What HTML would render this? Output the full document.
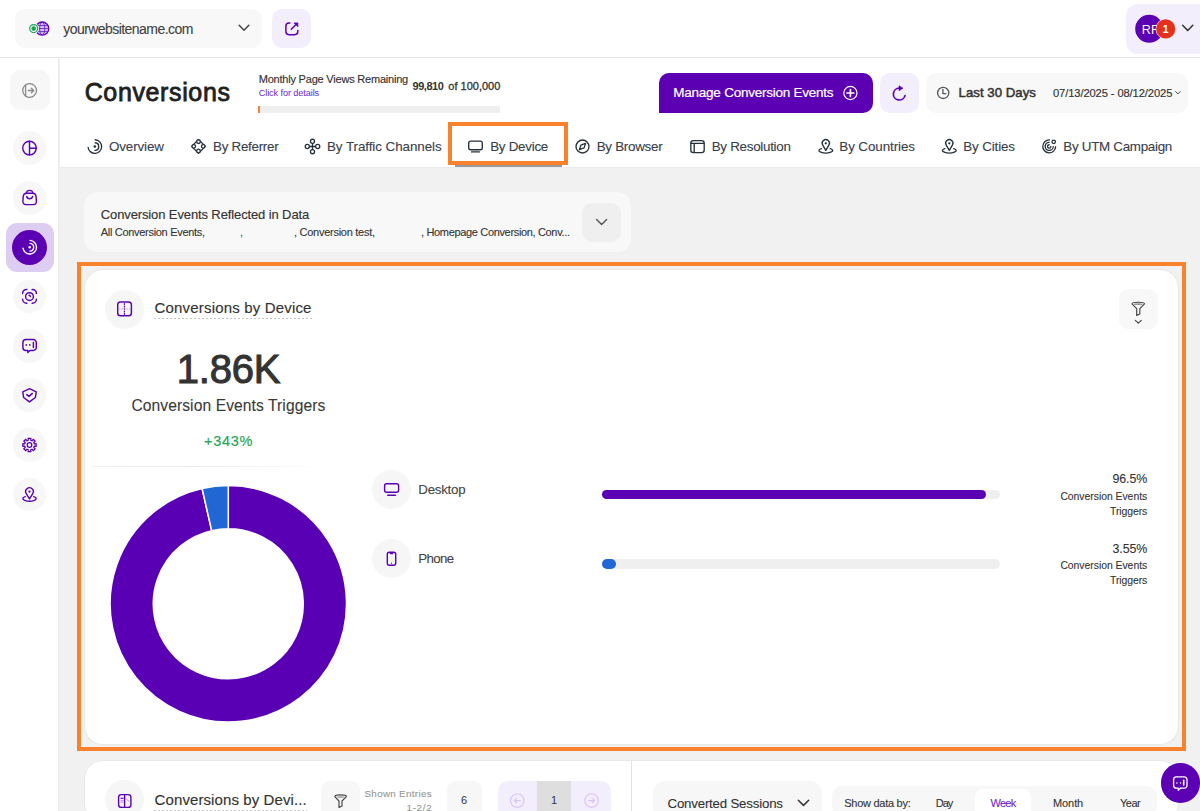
<!DOCTYPE html>
<html><head><meta charset="utf-8"><title>Conversions by Device</title>
<style>
html,body{margin:0;padding:0;width:1200px;height:811px;overflow:hidden;background:#f1f1f1;}
body{position:relative;font-family:"Liberation Sans",sans-serif;}
.t{position:absolute;white-space:nowrap;line-height:1;}
.b{position:absolute;box-sizing:border-box;}
svg.i{position:absolute;overflow:visible;}
</style></head><body>
<div class="b" style="left:0px;top:0px;width:1200px;height:811px;background:#f1f1f1;border-radius:0;"></div>
<div class="b" style="left:0px;top:0px;width:1200px;height:57px;background:#ffffff;border-radius:0;"></div>
<div class="b" style="left:0px;top:57px;width:1200px;height:1px;background:#e6e6e6;border-radius:0;"></div>
<div class="b" style="left:0px;top:58px;width:58px;height:753px;background:#ffffff;border-radius:0;"></div>
<div class="b" style="left:58px;top:58px;width:1.3px;height:753px;background:#e9e9e9;border-radius:0;"></div>
<div class="b" style="left:59.5px;top:58px;width:1141px;height:109px;background:#ffffff;border-radius:0;"></div>
<div class="b" style="left:59.5px;top:166.5px;width:1141px;height:1.2px;background:#ebebeb;border-radius:0;"></div>
<div class="b" style="left:15px;top:9px;width:247px;height:39px;background:#f8f8f8;border-radius:10px;"></div>
<div class="t" style="left:63.30px;top:21.55px;font-size:14.00px;color:#404040;letter-spacing:-0.559px;-webkit-text-stroke:0.1px #404040;">yourwebsitename.com</div>
<div class="b" style="left:272px;top:9px;width:39px;height:39px;background:#f3eefc;border-radius:10px;"></div>
<div class="b" style="left:1126px;top:4px;width:90px;height:50px;background:#f3eefc;border-radius:12px;"></div>
<div class="b" style="left:10px;top:70px;width:40px;height:40px;background:#f7f7f7;border-radius:10px;"></div>
<div class="b" style="left:12.5px;top:131.0px;width:33.6px;height:33.6px;background:#f7f7f7;border-radius:50%;"></div>
<div class="b" style="left:12.5px;top:181.0px;width:33.6px;height:33.6px;background:#f7f7f7;border-radius:50%;"></div>
<div class="b" style="left:12.5px;top:279.59999999999997px;width:33.6px;height:33.6px;background:#f7f7f7;border-radius:50%;"></div>
<div class="b" style="left:12.5px;top:329.0px;width:33.6px;height:33.6px;background:#f7f7f7;border-radius:50%;"></div>
<div class="b" style="left:12.5px;top:378.4px;width:33.6px;height:33.6px;background:#f7f7f7;border-radius:50%;"></div>
<div class="b" style="left:12.5px;top:428.0px;width:33.6px;height:33.6px;background:#f7f7f7;border-radius:50%;"></div>
<div class="b" style="left:12.5px;top:477.7px;width:33.6px;height:33.6px;background:#f7f7f7;border-radius:50%;"></div>
<div class="b" style="left:6px;top:222.5px;width:47.5px;height:49.5px;background:#decdf2;border-radius:11px;"></div>
<div class="b" style="left:12px;top:229.5px;width:35px;height:35px;background:#5b00b3;border-radius:50%;"></div>
<div class="t" style="left:84.70px;top:80.03px;font-size:25.00px;color:#1f1f1f;letter-spacing:0.630px;-webkit-text-stroke:0.8px #1f1f1f;">Conversions</div>
<div class="t" style="left:258.70px;top:74.09px;font-size:11.00px;color:#333333;letter-spacing:-0.207px;-webkit-text-stroke:0.15px #333333;">Monthly Page Views Remaining</div>
<div class="t" style="left:258.70px;top:88.61px;font-size:9.20px;color:#6d1fd1;letter-spacing:-0.111px;">Click for details</div>
<div class="t" style="left:412.50px;top:80.59px;font-size:11.00px;color:#333333;letter-spacing:-0.452px;font-weight:700;">99,810</div>
<div class="t" style="left:448.30px;top:80.59px;font-size:11.00px;color:#333333;letter-spacing:0.003px;-webkit-text-stroke:0.3px #333333;">of 100,000</div>
<div class="b" style="left:258px;top:106px;width:242px;height:6.5px;background:#efefef;border-radius:0;"></div>
<div class="b" style="left:258px;top:106px;width:1.5px;height:6.5px;background:#f0843a;border-radius:0;"></div>
<div class="b" style="left:659px;top:73px;width:214px;height:40px;background:#5b00b3;border-radius:10px 10px 10px 0;"></div>
<div class="t" style="left:673.30px;top:85.77px;font-size:13.50px;color:#ffffff;letter-spacing:-0.241px;-webkit-text-stroke:0.2px #ffffff;">Manage Conversion Events</div>
<div class="b" style="left:880px;top:73px;width:39px;height:40px;background:#f3eefc;border-radius:10px;"></div>
<div class="b" style="left:926px;top:73px;width:262px;height:40px;background:#f8f8f8;border-radius:10px;"></div>
<div class="t" style="left:958.50px;top:86.02px;font-size:13.20px;color:#333333;letter-spacing:0.043px;-webkit-text-stroke:0.5px #333333;">Last 30 Days</div>
<div class="t" style="left:1053.00px;top:87.92px;font-size:11.20px;color:#333333;letter-spacing:-0.117px;-webkit-text-stroke:0.15px #333333;">07/13/2025 - 08/12/2025</div>
<div class="t" style="left:109.00px;top:139.55px;font-size:13.40px;color:#39404a;letter-spacing:-0.125px;-webkit-text-stroke:0.1px #39404a;">Overview</div>
<div class="t" style="left:213.00px;top:139.55px;font-size:13.40px;color:#39404a;letter-spacing:-0.279px;-webkit-text-stroke:0.1px #39404a;">By Referrer</div>
<div class="t" style="left:327.00px;top:139.55px;font-size:13.40px;color:#39404a;letter-spacing:-0.068px;-webkit-text-stroke:0.1px #39404a;">By Traffic Channels</div>
<div class="t" style="left:490.20px;top:139.55px;font-size:13.40px;color:#39404a;letter-spacing:-0.275px;-webkit-text-stroke:0.1px #39404a;">By Device</div>
<div class="t" style="left:596.70px;top:139.55px;font-size:13.40px;color:#39404a;letter-spacing:-0.282px;-webkit-text-stroke:0.1px #39404a;">By Browser</div>
<div class="t" style="left:711.70px;top:139.55px;font-size:13.40px;color:#39404a;letter-spacing:-0.282px;-webkit-text-stroke:0.1px #39404a;">By Resolution</div>
<div class="t" style="left:839.30px;top:139.55px;font-size:13.40px;color:#39404a;letter-spacing:-0.092px;-webkit-text-stroke:0.1px #39404a;">By Countries</div>
<div class="t" style="left:963.30px;top:139.55px;font-size:13.40px;color:#39404a;letter-spacing:-0.145px;-webkit-text-stroke:0.1px #39404a;">By Cities</div>
<div class="t" style="left:1063.30px;top:139.55px;font-size:13.40px;color:#39404a;letter-spacing:-0.297px;-webkit-text-stroke:0.1px #39404a;">By UTM Campaign</div>
<div class="b" style="left:455px;top:165px;width:107px;height:2px;background:#9a9a9a;border-radius:0;"></div>
<div class="b" style="left:448px;top:122px;width:120px;height:43px;background:transparent;border-radius:0;border:4px solid #f9822c;box-sizing:border-box;"></div>
<div class="b" style="left:84px;top:192px;width:547px;height:60px;background:#f8f8f8;border-radius:14px;"></div>
<div class="t" style="left:100.75px;top:208.24px;font-size:13.00px;color:#333333;letter-spacing:-0.117px;-webkit-text-stroke:0.15px #333333;">Conversion Events Reflected in Data</div>
<div class="t" style="left:100.75px;top:226.94px;font-size:11.00px;color:#333333;letter-spacing:-0.305px;-webkit-text-stroke:0.1px #333333;">All Conversion Events,</div>
<div class="t" style="left:240.00px;top:226.94px;font-size:11.00px;color:#333333;letter-spacing:0.000px;">,</div>
<div class="t" style="left:294.00px;top:226.94px;font-size:11.00px;color:#333333;letter-spacing:-0.269px;-webkit-text-stroke:0.1px #333333;">, Conversion test,</div>
<div class="t" style="left:421.00px;top:226.94px;font-size:11.00px;color:#333333;letter-spacing:-0.337px;-webkit-text-stroke:0.1px #333333;">, Homepage Conversion, Conv...</div>
<div class="b" style="left:582px;top:203px;width:39px;height:39px;background:#efefef;border-radius:10px;"></div>
<div class="b" style="left:77px;top:262px;width:1109px;height:489px;background:transparent;border-radius:0;border:4px solid #f9822c;box-sizing:border-box;"></div>
<div class="b" style="left:85px;top:270px;width:1093px;height:474px;background:#ffffff;border-radius:18px;box-shadow:0 0 0 1px #e7e7e7;"></div>
<div class="b" style="left:105px;top:289.5px;width:39px;height:39px;background:#f6f6f6;border-radius:50%;"></div>
<div class="t" style="left:154.60px;top:300.30px;font-size:15.00px;color:#333333;letter-spacing:0.171px;-webkit-text-stroke:0.15px #333333;">Conversions by Device</div>
<div class="b" style="left:154px;top:318px;width:157.5px;height:1px;background:repeating-linear-gradient(90deg,#c2c2c2 0 2px,transparent 2px 4px);border-radius:0;"></div>
<div class="b" style="left:1119px;top:289px;width:39px;height:40px;background:#f8f8f8;border-radius:9px;"></div>
<div class="t" style="left:176.80px;top:348.83px;font-size:40.00px;color:#333333;letter-spacing:-0.225px;-webkit-text-stroke:1.05px #333333;">1.86K</div>
<div class="t" style="left:131.40px;top:397.99px;font-size:15.60px;color:#3a3a3a;letter-spacing:0.094px;-webkit-text-stroke:0.1px #3a3a3a;">Conversion Events Triggers</div>
<div class="t" style="left:204.00px;top:434.12px;font-size:14.50px;color:#22a55b;letter-spacing:0.718px;-webkit-text-stroke:0.15px #22a55b;">+343%</div>
<div class="b" style="left:92px;top:465.5px;width:230px;height:1.5px;background:linear-gradient(90deg,#f0f0f0,#ebebeb 45%,#f6f6f6 80%,#ffffff);border-radius:0;"></div>
<svg class="b" style="left:0;top:0" width="1200" height="811" viewBox="0 0 1200 811"><path d="M228.30 485.60 A118.2 118.2 0 1 1 202.11 488.54 L211.68 530.66 A75.0 75.0 0 1 0 228.30 528.80Z" fill="#5a00b4" stroke="#fff" stroke-width="1.5"/><path d="M202.11 488.54 A118.2 118.2 0 0 1 228.30 485.60 L228.30 528.80 A75.0 75.0 0 0 0 211.68 530.66Z" fill="#2067d4" stroke="#fff" stroke-width="1.5"/></svg>
<div class="b" style="left:371.8px;top:469.9px;width:39px;height:39px;background:#f6f6f6;border-radius:50%;"></div>
<div class="t" style="left:418.30px;top:482.64px;font-size:13.30px;color:#444444;letter-spacing:-0.252px;-webkit-text-stroke:0.1px #444444;">Desktop</div>
<div class="b" style="left:371.8px;top:539.0px;width:39px;height:39px;background:#f6f6f6;border-radius:50%;"></div>
<div class="t" style="left:418.30px;top:551.74px;font-size:13.30px;color:#444444;letter-spacing:-0.634px;-webkit-text-stroke:0.1px #444444;">Phone</div>
<div class="b" style="left:602px;top:489.7px;width:398px;height:9.5px;background:#efefef;border-radius:5px;"></div>
<div class="b" style="left:602px;top:489.7px;width:384px;height:9.5px;background:#5a00b4;border-radius:5px;"></div>
<div class="b" style="left:602px;top:558.9px;width:398px;height:9.7px;background:#efefef;border-radius:5px;"></div>
<div class="b" style="left:602px;top:558.9px;width:14px;height:9.7px;background:#2067d4;border-radius:5px;"></div>
<div class="t" style="left:1112.50px;top:473.40px;font-size:12.40px;color:#333333;letter-spacing:-0.089px;-webkit-text-stroke:0.1px #333333;">96.5%</div>
<div class="t" style="left:1060.40px;top:492.19px;font-size:10.40px;color:#333333;letter-spacing:-0.026px;-webkit-text-stroke:0.1px #333333;">Conversion Events</div>
<div class="t" style="left:1110.10px;top:507.09px;font-size:10.40px;color:#333333;letter-spacing:-0.079px;-webkit-text-stroke:0.1px #333333;">Triggers</div>
<div class="t" style="left:1112.50px;top:542.70px;font-size:12.40px;color:#333333;letter-spacing:-0.089px;-webkit-text-stroke:0.1px #333333;">3.55%</div>
<div class="t" style="left:1060.40px;top:561.49px;font-size:10.40px;color:#333333;letter-spacing:-0.026px;-webkit-text-stroke:0.1px #333333;">Conversion Events</div>
<div class="t" style="left:1110.10px;top:576.39px;font-size:10.40px;color:#333333;letter-spacing:-0.079px;-webkit-text-stroke:0.1px #333333;">Triggers</div>
<div class="b" style="left:85px;top:761px;width:1093px;height:60px;background:#ffffff;border-radius:18px;box-shadow:0 0 0 1px #e9e9e9;"></div>
<div class="b" style="left:630.8px;top:761px;width:1.2px;height:60px;background:#e3e3e3;border-radius:0;"></div>
<div class="b" style="left:105px;top:780px;width:39px;height:39px;background:#f6f6f6;border-radius:50%;"></div>
<div class="t" style="left:154.60px;top:792.30px;font-size:15.00px;color:#333333;letter-spacing:0.096px;-webkit-text-stroke:0.15px #333333;">Conversions by Devi...</div>
<div class="b" style="left:154px;top:810px;width:153px;height:1px;background:repeating-linear-gradient(90deg,#c2c2c2 0 2px,transparent 2px 4px);border-radius:0;"></div>
<div class="b" style="left:321px;top:781px;width:39px;height:39px;background:#f7f7f7;border-radius:9px;"></div>
<div class="t" style="left:364.50px;top:788.70px;font-size:9.80px;color:#969696;letter-spacing:0.324px;-webkit-text-stroke:0.1px #969696;">Shown Entries</div>
<div class="t" style="left:406.50px;top:802.90px;font-size:9.80px;color:#969696;letter-spacing:0.689px;-webkit-text-stroke:0.1px #969696;">1-2/2</div>
<div class="b" style="left:447px;top:781px;width:35px;height:39px;background:#f7f7f7;border-radius:9px;"></div>
<div class="t" style="left:461.00px;top:794.69px;font-size:11.00px;color:#333333;letter-spacing:0.000px;">6</div>
<div class="b" style="left:498px;top:781px;width:112.5px;height:39px;background:#f3eefc;border-radius:10px;"></div>
<div class="b" style="left:537.4px;top:781px;width:33.6px;height:39px;background:#dedede;border-radius:0;"></div>
<div class="t" style="left:551.00px;top:795.19px;font-size:11.00px;color:#333333;letter-spacing:0.000px;">1</div>
<div class="b" style="left:652.5px;top:781px;width:169px;height:39px;background:#f7f7f7;border-radius:12px;"></div>
<div class="t" style="left:667.50px;top:796.74px;font-size:13.30px;color:#333333;letter-spacing:-0.208px;-webkit-text-stroke:0.1px #333333;">Converted Sessions</div>
<div class="b" style="left:832px;top:786px;width:325px;height:30px;background:#f7f7f7;border-radius:10px;"></div>
<div class="t" style="left:844.25px;top:798.19px;font-size:11.00px;color:#333333;letter-spacing:-0.270px;-webkit-text-stroke:0.1px #333333;">Show data by:</div>
<div class="t" style="left:935.75px;top:798.19px;font-size:11.00px;color:#333333;letter-spacing:-1.040px;-webkit-text-stroke:0.1px #333333;">Day</div>
<div class="b" style="left:975px;top:788.75px;width:55.5px;height:30px;background:#ffffff;border-radius:8px;"></div>
<div class="t" style="left:990.50px;top:798.19px;font-size:11.00px;color:#6d1fd1;letter-spacing:-0.748px;-webkit-text-stroke:0.1px #6d1fd1;">Week</div>
<div class="t" style="left:1053.00px;top:798.19px;font-size:11.00px;color:#333333;letter-spacing:-0.083px;-webkit-text-stroke:0.1px #333333;">Month</div>
<div class="t" style="left:1120.00px;top:798.19px;font-size:11.00px;color:#333333;letter-spacing:-0.490px;-webkit-text-stroke:0.1px #333333;">Year</div>
<div class="b" style="left:1160.8px;top:763.2px;width:39.6px;height:39.6px;background:#5b00b3;border-radius:50%;"></div>
<svg class="b" style="left:0;top:0;pointer-events:none" width="1200" height="811" viewBox="0 0 1200 811"><circle cx="42.2" cy="28.6" r="6.6" fill="#d9c4f4" stroke="#5b00b3" stroke-width="1.3"/><g fill="none" stroke="#6a1fc9" stroke-width="0.9"><ellipse cx="42.2" cy="28.6" rx="2.6" ry="6.2"/><line x1="36" y1="25.6" x2="48.4" y2="25.6"/><line x1="35.8" y1="28.6" x2="48.6" y2="28.6"/><line x1="36" y1="31.6" x2="48.4" y2="31.6"/></g><circle cx="33.7" cy="28.6" r="5.3" fill="#f8f8f8"/><circle cx="33.7" cy="28.6" r="4.0" fill="none" stroke="#22a55b" stroke-width="1.2"/><circle cx="33.7" cy="28.6" r="2.3" fill="#17a34a"/><path d="M239.2 25.2L244 30.2L248.8 25.2" fill="none" stroke="#444" stroke-width="1.5" stroke-linecap="round" stroke-linejoin="round"/><g fill="none" stroke="#5b00b3" stroke-width="1.5" stroke-linecap="round" stroke-linejoin="round"><path d="M289.9 23.1H289a3.1 3.1 0 0 0 -3.1 3.1V31.6a3.1 3.1 0 0 0 3.1 3.1H294.7a3.1 3.1 0 0 0 3.1 -3.1V30.5"/><path d="M291.3 29.2L296.2 24.3"/></g><path d="M294 22.9H297.9V26.8Z" fill="#5b00b3" stroke="#5b00b3" stroke-width="0.7" stroke-linejoin="round"/><circle cx="1149.2" cy="28.8" r="14" fill="#5b00b3"/><text x="1150.2" y="33.5" font-family="Liberation Sans" font-size="12.6" fill="#fff" text-anchor="middle">RF</text><circle cx="1165.7" cy="28.9" r="10.2" fill="#f3eefc"/><circle cx="1165.7" cy="28.9" r="9.6" fill="#e5301c"/><text x="1165.6" y="32.6" font-family="Liberation Sans" font-weight="700" font-size="10.5" fill="#fff" text-anchor="middle">1</text><path d="M1182.6 25.3L1187.7 30.5L1192.8 25.3" fill="none" stroke="#333" stroke-width="1.5" stroke-linecap="round" stroke-linejoin="round"/><g fill="none" stroke="#8a8a8a" stroke-width="1.3" stroke-linecap="round" stroke-linejoin="round"><circle cx="29.6" cy="90.5" r="6.9"/><path d="M25.6 84.9V96.1"/><path d="M28.2 90.5H33.6M31.4 88.2L33.7 90.5L31.4 92.8"/></g><g fill="none" stroke="#5b00b3" stroke-width="1.4" stroke-linecap="round" stroke-linejoin="round"><circle cx="29.5" cy="148.1" r="6.8"/><path d="M29.5 141.3V154.9M29.5 148.3H36.3"/></g><g fill="none" stroke="#5b00b3" stroke-width="1.4" stroke-linecap="round" stroke-linejoin="round"><path d="M26.6 193.2H32.6C34.8 193.2 35.9 194.6 36.1 196.6L36.4 201.4C36.5 203.4 35.3 204.6 33.3 204.6H26C24 204.6 22.8 203.4 22.9 201.4L23.2 196.6C23.4 194.6 24.5 193.2 26.6 193.2Z"/><path d="M26.3 193.2C26.6 191.3 27.8 190.4 29.6 190.4C31.4 190.4 32.6 191.3 32.9 193.2"/><path d="M26.7 196.4C26.9 197.9 28 198.7 29.6 198.7C31.2 198.7 32.3 197.9 32.6 196.4"/></g><g fill="none" stroke="#ffffff" stroke-width="1.35" stroke-linecap="round"><path d="M30.06 240.41A6.8 6.8 0 1 1 22.97 248.15"/><path d="M30.04 243.31A3.9 3.9 0 0 1 29.84 251.10"/></g><circle cx="29.7" cy="247.2" r="1.25" fill="#ffffff"/><g fill="none" stroke="#5b00b3" stroke-width="1.45" stroke-linecap="round" stroke-linejoin="round"><path d="M22.6 293.4A4 4 0 0 1 26.6 289.4H26.9M32.1 289.4H32.4A4 4 0 0 1 36.4 293.4M36.4 299.2A4 4 0 0 1 32.4 303.2H32.1M26.9 303.2H26.6A4 4 0 0 1 22.6 299.2"/><circle cx="29.5" cy="296.6" r="3.9"/><path d="M29.1 295.3Q30.2 295.3 30.4 296.5"/></g><g fill="none" stroke="#5b00b3" stroke-width="1.45" stroke-linecap="round" stroke-linejoin="round"><path d="M26 339.5H33.2A3.1 3.1 0 0 1 36.3 342.6V347.4A3.1 3.1 0 0 1 33.2 350.5H29.8L27.8 352.4V350.5H26A3.1 3.1 0 0 1 22.9 347.4V342.6A3.1 3.1 0 0 1 26 339.5Z"/><path d="M33.4 342.4V347.6"/></g><circle cx="26.3" cy="344.9" r="0.85" fill="#5b00b3"/><circle cx="29.8" cy="344.9" r="0.85" fill="#5b00b3"/><g fill="none" stroke="#5b00b3" stroke-width="1.45" stroke-linecap="round" stroke-linejoin="round"><path d="M29.5 388.6L22.8 391.8L23.6 397.5L29.5 401.9L35.4 397.5L36.2 391.8Z"/><path d="M26.7 394.6L29 396.4L32.4 393.4"/></g><path d="M28.09 438.35 L30.91 438.35 L30.73 440.26 L31.99 440.78 L33.20 439.30 L35.20 441.30 L33.72 442.51 L34.24 443.77 L36.15 443.59 L36.15 446.41 L34.24 446.23 L33.72 447.49 L35.20 448.70 L33.20 450.70 L31.99 449.22 L30.73 449.74 L30.91 451.65 L28.09 451.65 L28.27 449.74 L27.01 449.22 L25.80 450.70 L23.80 448.70 L25.28 447.49 L24.76 446.23 L22.85 446.41 L22.85 443.59 L24.76 443.77 L25.28 442.51 L23.80 441.30 L25.80 439.30 L27.01 440.78 L28.27 440.26Z" fill="none" stroke="#5b00b3" stroke-width="1.25" stroke-linejoin="round"/><circle cx="29.5" cy="445.0" r="2.3" fill="none" stroke="#5b00b3" stroke-width="1.25"/><g fill="none" stroke="#5b00b3" stroke-width="1.4" stroke-linecap="round" stroke-linejoin="round"><path d="M29.50 498.80L26.39 493.78A3.8 3.8 0 1 1 32.61 493.78Z"/><path d="M25.30 496.65A6.7 2.5 0 1 0 33.70 496.65"/></g><circle cx="29.5" cy="491.6" r="1.15" fill="#5b00b3"/><g fill="none" stroke="#fff" stroke-width="1.2"><circle cx="850.4" cy="93" r="6.6"/></g><path d="M850.4 89.6V96.4M847 93H853.8" stroke="#fff" stroke-width="1.7" stroke-linecap="round"/><path d="M905 95.6A5.9 5.9 0 1 1 899.6 88.2" fill="none" stroke="#5b00b3" stroke-width="1.7" stroke-linecap="round"/><path d="M899 85.7L903 88.2L899 90.7Z" fill="#5b00b3" stroke="#5b00b3" stroke-width="0.6" stroke-linejoin="round"/><g fill="none" stroke="#555" stroke-width="1.3" stroke-linecap="round" stroke-linejoin="round"><circle cx="943.2" cy="92.9" r="5.6"/><path d="M942.9 89.4V93.6H945.9"/></g><path d="M1175.6 91.6L1177.9 93.9L1180.2 91.6" fill="none" stroke="#444" stroke-width="1" stroke-linecap="round" stroke-linejoin="round"/><g fill="none" stroke="#25313b" stroke-width="1.35" stroke-linecap="round"><path d="M95.20 139.78A6.8 6.8 0 1 1 88.11 147.52"/><path d="M95.17 142.78A3.8 3.8 0 0 1 94.97 150.37"/></g><circle cx="94.84" cy="146.57" r="1.3" fill="#25313b"/><g fill="none" stroke="#25313b" stroke-width="1.3" stroke-linejoin="round"><path d="M198.5 139.5L205.4 146.35L198.5 153.2L191.6 146.35Z"/></g><g fill="#fff" stroke="#25313b" stroke-width="1.3"><circle cx="198.5" cy="141.7" r="1.8"/><circle cx="203.2" cy="146.35" r="1.8"/><circle cx="198.5" cy="151" r="1.8"/><circle cx="193.8" cy="146.35" r="1.8"/></g><g fill="none" stroke="#25313b" stroke-width="1.3"><path d="M312.5 143.2V149.8M309.2 146.5H315.8"/><circle cx="312.5" cy="141.3" r="2.05"/><circle cx="317.7" cy="146.5" r="2.05"/><circle cx="312.5" cy="151.7" r="2.05"/><circle cx="307.3" cy="146.5" r="2.05"/></g><g fill="none" stroke="#25313b" stroke-width="1.35" stroke-linecap="round" stroke-linejoin="round"><rect x="468.7" y="141.1" width="13.6" height="8.6" rx="2"/><path d="M471.6 151.9H479.4"/></g><g fill="none" stroke="#25313b" stroke-width="1.35" stroke-linejoin="round"><circle cx="582.5" cy="146.5" r="6.5"/><path d="M585.6 143.4L584.1 147.9L579.4 149.6L580.9 145.1Z"/></g><g fill="none" stroke="#25313b" stroke-width="1.35" stroke-linejoin="round"><rect x="690.8" y="140.6" width="13.4" height="12" rx="2.6"/><path d="M690.8 143.4H704.2M694.2 143.4V152.6"/></g><g fill="none" stroke="#25313b" stroke-width="1.35" stroke-linecap="round" stroke-linejoin="round"><path d="M825.80 150.30L822.85 145.36A3.6 3.6 0 1 1 828.75 145.36Z"/><path d="M821.40 148.57A6.9 2.5 0 1 0 830.20 148.57"/></g><circle cx="825.8" cy="143.3" r="1.15" fill="#25313b"/><g fill="none" stroke="#25313b" stroke-width="1.35" stroke-linecap="round" stroke-linejoin="round"><path d="M949.30 150.30L946.35 145.36A3.6 3.6 0 1 1 952.25 145.36Z"/><path d="M944.90 148.57A6.9 2.5 0 1 0 953.70 148.57"/></g><circle cx="949.3" cy="143.3" r="1.15" fill="#25313b"/><g fill="none" stroke="#25313b" stroke-width="1.3" stroke-linecap="round"><path d="M1055.65 146.63A6.45 6.45 0 1 1 1049.43 139.95"/><path d="M1053.25 146.54A4.05 4.05 0 1 1 1049.20 142.35"/><path d="M1050.85 146.40A1.65 1.65 0 1 1 1049.20 144.75"/><circle cx="1053.7" cy="141.8" r="1.75"/></g><path d="M596.6 219.6L601.6 224.5L606.6 219.6" fill="none" stroke="#555" stroke-width="1.4" stroke-linecap="round" stroke-linejoin="round"/><rect x="117.7" y="301.9" width="13.7" height="13.9" rx="2.8" fill="none" stroke="#5b00b3" stroke-width="1.45"/><path d="M124.4 303.5V314.5" stroke="#5b00b3" stroke-width="1.2" stroke-dasharray="0.9 1.6" stroke-linecap="round"/><path d="M119.4 309H129.8" stroke="#a67ce0" stroke-width="1.1" stroke-dasharray="1 1.4"/><g fill="none" stroke="#444" stroke-width="1.15" stroke-linecap="round" stroke-linejoin="round"><path d="M1132 303.8C1132 302.6 1134.6 302.2 1138.2 302.2C1141.8 302.2 1144.5 302.6 1144.5 303.8L1139.8 308.6V314L1136.7 315.6V308.6Z"/><path d="M1135.3 320.3L1138.3 323.2L1141.3 320.3"/></g><ellipse cx="1138.2" cy="304.2" rx="4.4" ry="0.9" fill="#999"/><g fill="none" stroke="#5b00b3" stroke-width="1.4" stroke-linecap="round" stroke-linejoin="round"><rect x="384.6" y="483.7" width="14" height="8.6" rx="2"/><path d="M387.7 495.2H395.5"/><rect x="387.3" y="552.3" width="8.4" height="13" rx="2"/><path d="M390.3 553.6H392.7"/></g><circle cx="391.5" cy="563.2" r="0.6" fill="#5b00b3"/><g fill="none" stroke="#5b00b3" stroke-width="1.4" stroke-linejoin="round"><rect x="118.6" y="794.6" width="12.3" height="12.8" rx="2.7"/><path d="M124.6 794.6V807.4"/><path d="M120.5 798.3H123.6" stroke-width="1.1"/><path d="M120.5 800.6H123.6M120.5 802.2H123.6" stroke="#a67ce0" stroke-width="0.8"/><path d="M125.8 798.6L129.2 801.6" stroke="#a67ce0" stroke-width="0.8"/></g><g fill="none" stroke="#444" stroke-width="1.15" stroke-linecap="round" stroke-linejoin="round"><path d="M334.8 796.6C334.8 795.3 337.2 794.8 340.6 794.8C344 794.8 346.4 795.3 346.4 796.6L342 801V806L339 807.6V801Z"/></g><ellipse cx="340.6" cy="797" rx="4" ry="0.8" fill="#999"/><g fill="none" stroke="#d8c3f5" stroke-width="1.1" stroke-linecap="round" stroke-linejoin="round"><circle cx="517.3" cy="800.6" r="6.8"/><path d="M520.5 800.6H514.3M516.6 798.3L514.3 800.6L516.6 802.9"/><circle cx="591.6" cy="800.6" r="6.8"/><path d="M588.4 800.6H594.6M592.3 798.3L594.6 800.6L592.3 802.9"/></g><path d="M798.3 800.2L803.5 805.4L808.7 800.2" fill="none" stroke="#333" stroke-width="1.5" stroke-linecap="round" stroke-linejoin="round"/><g fill="none" stroke="#fff" stroke-width="1.3" stroke-linecap="round" stroke-linejoin="round"><path d="M1176.4 776.9H1184.2A2.8 2.8 0 0 1 1187 779.7V785.4A2.8 2.8 0 0 1 1184.2 788.2H1180.4L1178.3 790.3V788.2H1176.4A2.8 2.8 0 0 1 1173.6 785.4V779.7A2.8 2.8 0 0 1 1176.4 776.9Z"/><path d="M1183.7 780.4V785" stroke-width="1.6"/></g><circle cx="1176.9" cy="783" r="0.8" fill="#fff"/><circle cx="1180.6" cy="783" r="0.8" fill="#fff"/></svg>
</body></html>
